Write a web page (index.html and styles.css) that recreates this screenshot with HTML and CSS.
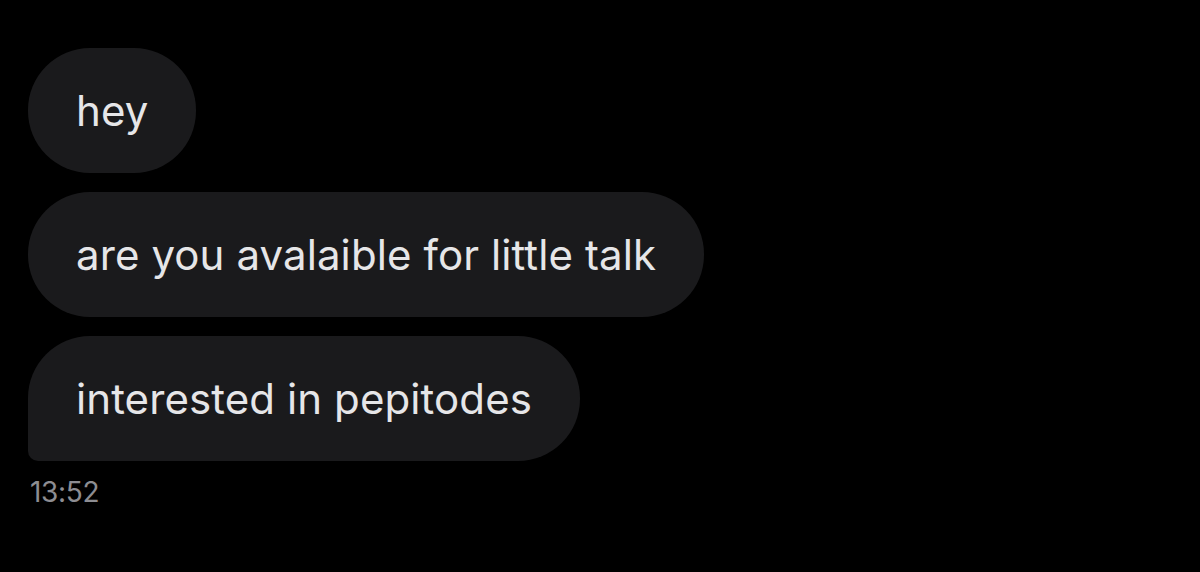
FILE: index.html
```html
<!DOCTYPE html>
<html>
<head>
<meta charset="utf-8">
<link rel="stylesheet" href="styles.css">
</head>
<body>
<div class="chat">
  <div class="bubble first">hey</div>
  <div class="bubble">are you avalaible for little talk</div>
  <div class="bubble last">interested in pepitodes</div>
  <div class="time">13:52</div>
</div>
</body>
</html>
```
FILE: styles.css
```css
html, body {
  margin: 0;
  padding: 0;
  background: #000;
  height: 100%;
}
.chat {
  display: flex;
  flex-direction: column;
  align-items: flex-start;
  gap: 19px;
  padding: 48px 0 0 28px;
  font-family: "Inter", "Liberation Sans", sans-serif;
}
.bubble {
  box-sizing: border-box;
  height: 125px;
  display: flex;
  align-items: center;
  padding: 0 48px;
  background: #1a1a1c;
  color: #e6e6e8;
  font-size: 42px;
  border-radius: 62px;
  letter-spacing: 0.1px;
}
.bubble.last {
  border-bottom-left-radius: 10px;
}
.time {
  margin-top: -5px;
  padding-left: 2px;
  color: #8d8d92;
  font-size: 28px;
  letter-spacing: -0.3px;
}
```
